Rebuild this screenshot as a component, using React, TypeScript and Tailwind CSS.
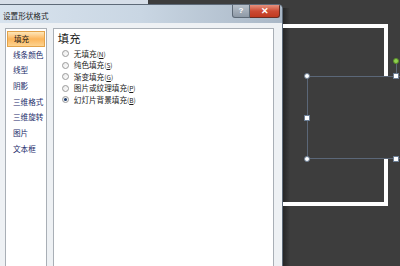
import React from 'react';

const font = { fontFamily: '"Noto Sans CJK SC", "Liberation Sans", sans-serif' };

const menuItems = ['填充', '线条颜色', '线型', '阴影', '三维格式', '三维旋转', '图片', '文本框'];

const fillOptions = [
  { label: '无填充', key: 'N' },
  { label: '纯色填充', key: 'S' },
  { label: '渐变填充', key: 'G' },
  { label: '图片或纹理填充', key: 'P' },
  { label: '幻灯片背景填充', key: 'B' },
];

function Handle({ x, y, round }: { x: number; y: number; round?: boolean }) {
  return (
    <div
      className={`absolute w-[6px] h-[6px] bg-white border border-[#6d7f95] ${round ? 'rounded-full' : ''}`}
      style={{ left: x - 3, top: y - 3 }}
    />
  );
}

export default function App() {
  return (
    <div className="relative w-[400px] h-[266px] overflow-hidden bg-[#3d3d3d]" style={font}>
      {/* ribbon remnant above the dialog */}
      <div className="absolute left-0 top-0 w-[148px] h-[4px] bg-[#d6dee8]" />

      {/* dialog shadow */}
      <div className="absolute left-[283px] top-[8px] w-[7px] h-[258px] bg-gradient-to-r from-[#262626] to-[#3d3d3d]" />

      {/* slide canvas: white outlined shape */}
      <div className="absolute left-[250px] top-[24px] w-[138px] h-[182px] border-4 border-white" />

      {/* selected shape */}
      <div className="absolute left-[307px] top-[76px] w-[100px] h-[83px] border border-[#5b6778] bg-[#3d3d3d]" />
      <div className="absolute left-[395.5px] top-[64px] w-px h-[10px] bg-[#5b6778]" />
      <div className="absolute left-[393px] top-[58px] w-[6px] h-[6px] rounded-full bg-[#8fd14f] border border-[#5a8f2a]" />
      <Handle x={307} y={76} round />
      <Handle x={307} y={159} round />
      <Handle x={307} y={118} />
      <Handle x={396} y={76} />
      <Handle x={396} y={159} />

      {/* dialog */}
      <div className="absolute left-0 top-[4px] w-[283px] h-[270px] flex flex-col rounded-tr-[5px] border-t border-r border-[#5e6a78] bg-gradient-to-b from-[#dbe5ef] to-[#c6d4e2] overflow-hidden">
        {/* title bar */}
        <div className="h-[18px] flex items-start bg-gradient-to-r from-[#d8e3ee] via-[#c9d6e3] to-[#a9b7c6]">
          <div className="text-[7.6px] leading-[16px] pt-[3px] pl-[3px] text-[#1e1e1e] flex-1 whitespace-nowrap">设置形状格式</div>
          <div className="flex mr-[2px]">
            <div className="w-[18px] h-[13px] flex items-center justify-center rounded-bl-[3px] border border-t-0 border-[#5d6976] bg-gradient-to-b from-[#b7c0ca] to-[#8e99a6] text-white text-[8px] font-bold leading-none" style={{ fontFamily: '"Liberation Sans", sans-serif' }}>
              ?
            </div>
            <div className="w-[30px] h-[13px] flex items-center justify-center rounded-br-[3px] border border-t-0 border-l-0 border-[#6b2c22] bg-gradient-to-b from-[#e6917f] via-[#cc4a33] to-[#c0391f] text-white text-[9px] font-bold leading-none" style={{ fontFamily: '"Liberation Sans", sans-serif' }}>
              ✕
            </div>
          </div>
        </div>

        {/* body */}
        <div className="flex-1 flex gap-[6px] pt-[5px] pl-[5px] pr-[8px] bg-[#eef1f4]">
          {/* left category list */}
          <div className="w-[42px] h-[239px] bg-white border border-[#a9afb6] px-px pt-[2px]">
            {menuItems.map((item, i) => (
              <div
                key={item}
                className={`h-[15.7px] text-[7.6px] pl-[6px] whitespace-nowrap ${
                  i === 0
                    ? 'bg-gradient-to-b from-[#fde7b9] via-[#fbb55a] to-[#fdd38f] border border-[#e3a34a] text-[#1a1a1a] leading-[13.7px]'
                    : 'text-[#1a2b6a] leading-[15.7px]'
                }`}
              >
                {item}
              </div>
            ))}
          </div>

          {/* right panel */}
          <div className="w-[222px] h-[239px] bg-white border border-[#a9afb6] pl-[4px] pt-[2px]">
            <div className="text-[11.3px] leading-[15px] text-[#1a1a1a]">填充</div>
            <div className="flex flex-col pt-[2px]">
              {fillOptions.map((opt, i) => (
                <div key={opt.key} className="h-[11.5px] flex items-center gap-[5px] pl-[4px]">
                  <div className="w-[7px] h-[7px] rounded-full border border-[#9a9a9a] bg-gradient-to-br from-[#e9e9e9] to-[#fdfdfd] flex items-center justify-center">
                    {i === 4 && <div className="w-[3px] h-[3px] rounded-full bg-[#1d3c6e]" />}
                  </div>
                  <div className="text-[7.6px] leading-none text-[#1a1a1a] whitespace-nowrap">
                    {opt.label}
                    <span className="text-[6.5px]">(<span className="underline">{opt.key}</span>)</span>
                  </div>
                </div>
              ))}
            </div>
          </div>
        </div>
      </div>
    </div>
  );
}
